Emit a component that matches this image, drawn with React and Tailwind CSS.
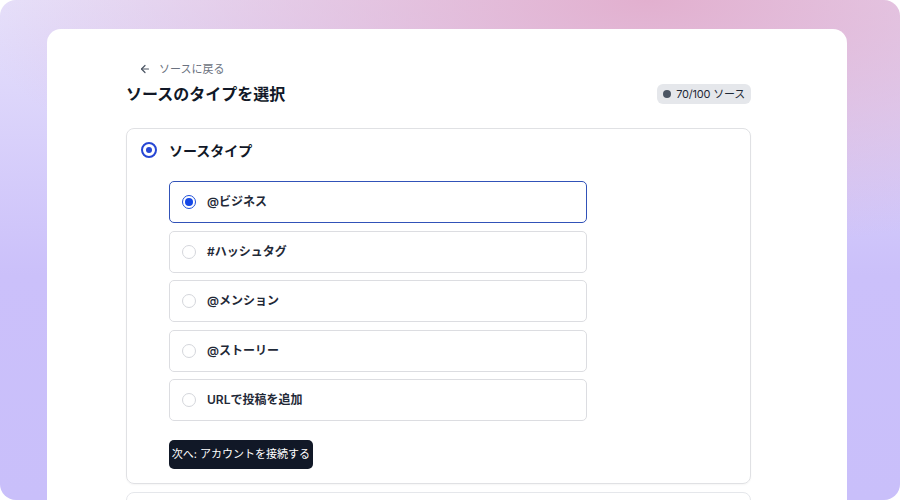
import React from 'react'

const options = [
  { label: "@ビジネス", selected: true },
  { label: "#ハッシュタグ" },
  { label: "@メンション" },
  { label: "@ストーリー" },
  { label: "URLで投稿を追加" },
];

const Radio = ({ selected }) =>
  selected ? (
    <span className="w-[14px] h-[14px] rounded-full border-[1.5px] border-[#1f4fd8] flex items-center justify-center shrink-0">
      <span className="w-[8px] h-[8px] rounded-full bg-[#1447e6]" />
    </span>
  ) : (
    <span className="w-[14px] h-[14px] rounded-full border border-[#d4d6db] shrink-0" />
  );

const App = () => {
  return (
    <div className="w-[900px] h-[500px] overflow-hidden rounded-[16px] bg-[radial-gradient(ellipse_75%_50%_at_72%_0%,#e2b0cf_0%,rgba(226,176,207,0)_100%),linear-gradient(to_bottom,#e6e1fb,#cbc0fa_55%,#c9bffa)] pt-[29px] pl-[47px] font-['Inter','Noto_Sans_CJK_JP',sans-serif]">
      <div className="w-[800px] h-[500px] bg-white rounded-t-[14px] pl-[79px] pt-[33px]">
        <div className="w-[625px]">
          <a className="flex items-center gap-[8px] pl-[13px] text-[11px] text-[#6b7280] h-[14px] leading-[14px]">
            <svg width="12" height="12" viewBox="0 0 24 24" fill="none" stroke="#4b5563" strokeWidth="2.4" strokeLinecap="round" strokeLinejoin="round">
              <path d="M19 12H5" />
              <path d="M12 19l-7-7 7-7" />
            </svg>
            ソースに戻る
          </a>
          <div className="flex items-center justify-between mt-[6px] h-[24px]">
            <h1 className="text-[16px] font-bold text-[#111827] leading-[24px]">ソースのタイプを選択</h1>
            <div className="flex items-center gap-[5px] h-[20px] pl-[6px] pr-[6px] rounded-[6px] bg-[#e5e7eb] text-[11px] tracking-[-0.2px] text-[#1f2937]">
              <span className="w-[8px] h-[8px] rounded-full bg-[#4b5563]" />
              70/100 ソース
            </div>
          </div>

          <section className="mt-[22px] border border-[#e0e1e4] rounded-[8px] pb-[14px] shadow-[0_1px_2px_rgba(0,0,0,0.04)]">
            <div className="flex items-center gap-[12px] pl-[14px] h-[42px]">
              <span className="w-[16px] h-[16px] rounded-full border-2 border-[#2747d4] flex items-center justify-center">
                <span className="w-[6px] h-[6px] rounded-full bg-[#2747d4]" />
              </span>
              <span className="text-[14px] font-semibold text-[#111827]">ソースタイプ</span>
            </div>
            <div className="pl-[42px] pt-[10px] flex flex-col gap-[7.5px]">
              {options.map((o, i) => (
                <div
                  key={i}
                  className={
                    o.selected
                      ? "w-[418px] h-[42px] rounded-[5px] border border-[#3152b8] flex items-center gap-[11px] pl-[12px]"
                      : "w-[418px] h-[42px] rounded-[5px] border border-[#dcdde1] flex items-center gap-[11px] pl-[12px]"
                  }
                >
                  <Radio selected={o.selected} />
                  <span className="text-[12px] font-semibold text-[#1f2937]">{o.label}</span>
                </div>
              ))}
            </div>
            <div className="pl-[42px] mt-[19px]">
              <button className="h-[29px] w-[144px] rounded-[5px] bg-[#111827] text-white text-[11px] flex items-center justify-center">
                次へ: アカウントを接続する
              </button>
            </div>
          </section>

          <section className="mt-[8px] h-[60px] border border-[#e5e7eb] rounded-[8px]" />
        </div>
      </div>
    </div>
  );
};

export default App
